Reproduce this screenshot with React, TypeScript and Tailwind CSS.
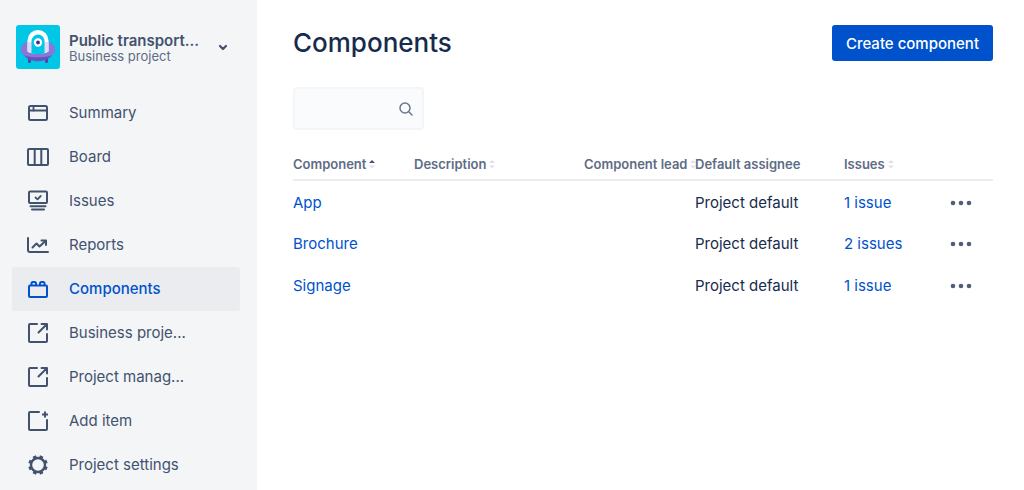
import type { ReactNode } from "react";

function Icon({ children }: { children: ReactNode }) {
  return (
    <svg
      viewBox="0 0 24 24"
      className="size-6 shrink-0"
      fill="none"
      stroke="currentColor"
      strokeWidth="2"
      strokeLinecap="round"
      strokeLinejoin="round"
      aria-hidden="true"
    >
      {children}
    </svg>
  );
}

const SummaryIcon = (
  <Icon>
    <rect x="3" y="5" width="18" height="14" rx="1.5" />
    <path d="M3 9.5h18" strokeWidth="1.8" />
    <path d="M7.5 5.5v4" strokeWidth="1.8" />
  </Icon>
);

const BoardIcon = (
  <Icon>
    <rect x="2" y="4" width="20" height="16" rx="1" />
    <path d="M8.7 4v16M15.3 4v16" />
  </Icon>
);

const IssuesIcon = (
  <Icon>
    <rect x="3" y="2.5" width="18" height="11.5" rx="1" />
    <path d="M9.5 8.500l2 1.8 3.2-3.3" strokeWidth="1.8" />
    <path d="M4.5 17.300h15M6 20.500h12" strokeWidth="2" />
  </Icon>
);

const ReportsIcon = (
  <Icon>
    <path d="M2 5v12a2 2 0 0 0 2 2h18" />
    <path d="M6.5 14.5l4-4 3 3L19.500 8" />
    <path d="M15.500 7.500h4.500v4.500" />
  </Icon>
);

const ComponentsIcon = (
  <Icon>
    <rect x="3" y="8.500" width="18" height="11.5" rx="1" />
    <path d="M5.500 8V6.500a1.500 1.500 0 0 1 1.500-1.500h1.500a1.500 1.500 0 0 1 1.500 1.500v1.500M14 8V6.500a1.500 1.500 0 0 1 1.500-1.500h1.500a1.500 1.500 0 0 1 1.500 1.500v1.500" />
  </Icon>
);

const ShortcutIcon = (
  <Icon>
    <path d="M11 3H4a1 1 0 0 0-1 1v16a1 1 0 0 0 1 1h16a1 1 0 0 0 1-1v-7" />
    <path d="M12.500 11.500L20.500 3.500M15.500 3H21v5.500" />
  </Icon>
);

const AddItemIcon = (
  <Icon>
    <path d="M13 3H4a1 1 0 0 0-1 1v16a1 1 0 0 0 1 1h16a1 1 0 0 0 1-1v-9" />
    <path d="M19 2.500v6M16 5.500h6" strokeLinecap="butt" />
  </Icon>
);

const SettingsIcon = (
  <Icon>
    <circle cx="12" cy="12" r="7" strokeWidth="2.400" />
    <path
      d="M14.800 5.200l.9-2.200M18.800 9.200l2.200-.9M18.800 14.800l2.200.9M14.800 18.800l.9 2.200M9.200 18.800l-.9 2.200M5.200 14.800l-2.200.9M5.200 9.200l-2.200-.9M9.200 5.200l-.9-2.200"
      strokeWidth="3.600"
      strokeLinecap="butt"
    />
  </Icon>
);

const navItems = [
  { label: "Summary", icon: SummaryIcon },
  { label: "Board", icon: BoardIcon },
  { label: "Issues", icon: IssuesIcon },
  { label: "Reports", icon: ReportsIcon },
  { label: "Components", icon: ComponentsIcon, active: true },
  { label: "Business proje...", icon: ShortcutIcon },
  { label: "Project manag...", icon: ShortcutIcon },
  { label: "Add item", icon: AddItemIcon },
  { label: "Project settings", icon: SettingsIcon },
];

const rows = [
  { name: "App", assignee: "Project default", issues: "1 issue" },
  { name: "Brochure", assignee: "Project default", issues: "2 issues" },
  { name: "Signage", assignee: "Project default", issues: "1 issue" },
];

function ProjectAvatar() {
  return (
    <svg viewBox="0 0 44 44" className="size-11 shrink-0 rounded-[3px]" aria-hidden="true">
      <rect width="44" height="44" fill="#00c7e6" />
      <path d="M12 31h3v5.500a1.500 1.500 0 0 1-3 0zM29 31h3v5.500a1.500 1.500 0 0 1-3 0z" fill="#5243aa" />
      <ellipse cx="22" cy="24.500" rx="17.300" ry="10" fill="#8777d9" />
      <path d="M8 30.300C15 33 29 33 36 30.300C33 34 28 36.300 22 36.300S11 34 8 30.300z" fill="#6554c0" />
      <path d="M11.500 15.500a10.500 10.500 0 0 1 21 0V26.500c-4 3.300-17 3.300-21 0z" fill="#fff" />
      <path d="M11.500 17h21v9.500c-4 3.300-17 3.300-21 0z" fill="#e0dbf7" />
      <path d="M15.500 16.500a6.500 7 0 0 1 13 0v12c-4 .8-9 .8-13 0z" fill="#00c7e6" />
      <circle cx="22" cy="17.500" r="4.200" fill="#fff" />
      <circle cx="22" cy="17.500" r="1.900" fill="#403294" />
    </svg>
  );
}

function SortMark({ ascending = false }: { ascending?: boolean }) {
  return (
    <svg viewBox="0 0 8 10" className="h-2.5 w-2 shrink-0" aria-hidden="true">
      <path d="M1 4l3-3 3 3z" fill={ascending ? "#42526e" : "#dfe1e6"} />
      <path d="M1 6.500l3 3 3-3z" fill="#dfe1e6" />
    </svg>
  );
}

function SortHeader({ label, ascending }: { label: string; ascending?: boolean }) {
  return (
    <th scope="col" className="p-0 text-left font-semibold">
      <button type="button" className="flex items-center gap-0.5 whitespace-nowrap">
        {label}
        <SortMark ascending={ascending} />
      </button>
    </th>
  );
}

export default function App() {
  return (
    <div className="flex min-h-screen bg-white font-['Inter','Liberation_Sans',sans-serif] text-[15px] leading-5 text-[#172b4d]">
      <aside className="w-[257px] shrink-0 bg-[#f4f5f7] text-[#42526e]">
        <button type="button" className="flex w-full items-center gap-[9px] pt-[25px] pl-4 text-left">
          <ProjectAvatar />
          <span className="flex w-[137px] flex-col pt-0.5 whitespace-nowrap">
            <span className="leading-[17px] font-semibold">Public transport...</span>
            <span className="text-[13px] leading-[15px] text-[#5e6c84]">Business project</span>
          </span>
          <svg viewBox="0 0 16 16" className="size-4" fill="none" stroke="currentColor" strokeWidth="2.2" strokeLinecap="round" strokeLinejoin="round" aria-hidden="true">
            <path d="M5 7l3 3 3-3" />
          </svg>
        </button>
        <nav aria-label="Project" className="mt-[22px] pr-[17px] pl-3">
          <ul>
            {navItems.map((item) => (
              <li key={item.label}>
                <a
                  href="#"
                  aria-current={item.active ? "page" : undefined}
                  className={
                    item.active
                      ? "flex h-11 items-center gap-[19px] rounded-[3px] bg-[#ebecf0] pl-3.5 font-medium text-[#0052cc]"
                      : "flex h-11 items-center gap-[19px] rounded-[3px] pl-3.5"
                  }
                >
                  {item.icon}
                  {item.label}
                </a>
              </li>
            ))}
          </ul>
        </nav>
      </aside>

      <main className="min-w-0 flex-1 pt-[25px] pr-[31px] pl-9">
        <header className="flex items-center justify-between">
          <h1 className="text-[26px] leading-8 font-medium">Components</h1>
          <button type="button" className="h-9 rounded-[3px] bg-[#0052cc] px-3.5 pt-px font-medium text-white">
            Create component
          </button>
        </header>

        <div className="mt-[26px] flex h-[43px] w-[131px] items-center rounded-[4px] border-2 border-[#f4f5f7] bg-[#fafbfc] pr-2">
          <input type="search" aria-label="Search components" className="h-full w-full min-w-0 bg-transparent pl-2 outline-none" />
          <svg viewBox="0 0 16 16" className="size-4 shrink-0" fill="none" stroke="#6b778c" strokeWidth="1.500" strokeLinecap="round" aria-hidden="true">
            <circle cx="7" cy="7" r="5" />
            <path d="M10.800 10.800L14 14" />
          </svg>
        </div>

        <table className="mt-[18px] w-full table-fixed border-collapse">
          <colgroup>
            <col className="w-[121px]" />
            <col />
            <col className="w-[111px]" />
            <col className="w-[149px]" />
            <col className="w-[90px]" />
            <col className="w-[59px]" />
          </colgroup>
          <thead>
            <tr className="h-8 border-b-2 border-[#ebecf0] text-[13px] text-[#5e6c84]">
              <SortHeader label="Component" ascending />
              <SortHeader label="Description" />
              <SortHeader label="Component lead" />
              <th scope="col" className="p-0 text-left font-semibold">Default assignee</th>
              <SortHeader label="Issues" />
              <th scope="col" aria-label="Actions" className="p-0" />
            </tr>
          </thead>
          <tbody>
            {rows.map((row) => (
              <tr key={row.name} className="h-[42px]">
                <td className="p-0 pt-0.5">
                  <a href="#" className="text-[#0052cc]">{row.name}</a>
                </td>
                <td className="p-0" />
                <td className="p-0" />
                <td className="p-0 pt-0.5">{row.assignee}</td>
                <td className="p-0 pt-0.5">
                  <a href="#" className="text-[#0052cc]">{row.issues}</a>
                </td>
                <td className="p-0 pt-0.5">
                  <button type="button" aria-label={`Actions for ${row.name}`} className="ml-auto mr-5 flex size-6 items-center justify-center">
                    <svg viewBox="0 0 24 24" className="size-6" fill="#505f79" aria-hidden="true">
                      <circle cx="4" cy="12" r="2.300" />
                      <circle cx="12" cy="12" r="2.300" />
                      <circle cx="20" cy="12" r="2.300" />
                    </svg>
                  </button>
                </td>
              </tr>
            ))}
          </tbody>
        </table>
      </main>
    </div>
  );
}
